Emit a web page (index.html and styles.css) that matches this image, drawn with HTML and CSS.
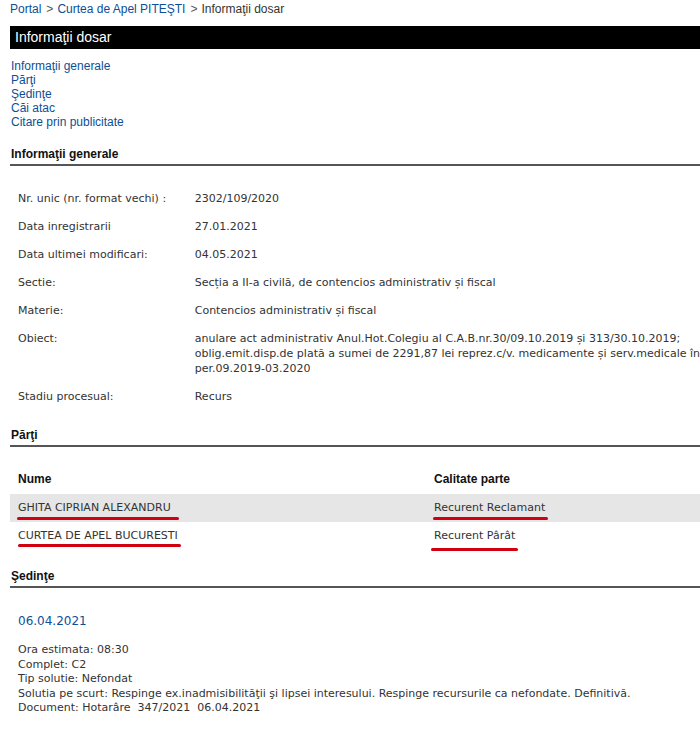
FILE: index.html
```html
<!DOCTYPE html>
<html lang="ro">
<head>
<meta charset="utf-8">
<title>Informaţii dosar</title>
<link rel="stylesheet" href="styles.css">
</head>
<body>
<div class="page">
  <div class="breadcrumb">
    <a href="#">Portal</a><span class="sep">&gt;</span><a href="#">Curtea de Apel PITEŞTI</a><span class="sep">&gt;</span><span class="current">Informaţii dosar</span>
  </div>
  <div class="titlebar">Informaţii dosar</div>
  <ul class="toc">
    <li><a href="#">Informaţii generale</a></li>
    <li><a href="#">Părţi</a></li>
    <li><a href="#">Şedinţe</a></li>
    <li><a href="#">Căi atac</a></li>
    <li><a href="#">Citare prin publicitate</a></li>
  </ul>

  <h2 class="section-title first">Informaţii generale</h2>
  <table class="info">
    <tr><td class="label">Nr. unic (nr. format vechi) :</td><td>2302/109/2020</td></tr>
    <tr><td class="label">Data inregistrarii</td><td>27.01.2021</td></tr>
    <tr><td class="label">Data ultimei modificari:</td><td>04.05.2021</td></tr>
    <tr><td class="label">Sectie:</td><td>Secția a II-a civilă, de contencios administrativ și fiscal</td></tr>
    <tr><td class="label">Materie:</td><td>Contencios administrativ și fiscal</td></tr>
    <tr><td class="label">Obiect:</td><td class="nowrap">anulare act administrativ Anul.Hot.Colegiu al C.A.B.nr.30/09.10.2019 și 313/30.10.2019;<br>oblig.emit.disp.de plată a sumei de 2291,87 lei reprez.c/v. medicamente și serv.medicale în<br>per.09.2019-03.2020</td></tr>
    <tr><td class="label">Stadiu procesual:</td><td>Recurs</td></tr>
  </table>

  <h2 class="section-title">Părţi</h2>
  <table class="parties">
    <thead>
      <tr><th class="col-name">Nume</th><th>Calitate parte</th></tr>
    </thead>
    <tbody>
      <tr class="shaded"><td><span class="mark mark-name1">GHITA CIPRIAN ALEXANDRU</span></td><td><span class="mark mark-role1">Recurent Reclamant</span></td></tr>
      <tr><td><span class="mark mark-name2">CURTEA DE APEL BUCURESTI</span></td><td><span class="mark mark-role2">Recurent Pârât</span></td></tr>
    </tbody>
  </table>

  <h2 class="section-title sessions">Şedinţe</h2>
  <div class="hearing">
    <div class="hearing-date">06.04.2021</div>
    <div class="hearing-details">
      Ora estimata: 08:30<br>
      Complet: C2<br>
      Tip solutie: Nefondat<br>
      Solutia pe scurt: Respinge ex.inadmisibilităţii şi lipsei interesului. Respinge recursurile ca nefondate. Definitivă.<br>
      Document: Hotarâre&nbsp; 347/2021&nbsp; 06.04.2021
    </div>
  </div>
</div>
</body>
</html>
```

FILE: styles.css
```css
html, body {
  margin: 0;
  padding: 0;
  background: #fff;
  overflow: hidden;
}

.page {
  padding-left: 10px;
  font-family: "Liberation Sans", Arial, sans-serif;
  font-size: 12px;
  color: #222;
}

a {
  color: #0d4f97;
  text-decoration: none;
}

.breadcrumb {
  padding-top: 2px;
  line-height: 14px;
  color: #333;
}

.breadcrumb .sep {
  color: #555;
  margin: 0 4px 0 5px;
}

.titlebar {
  margin-top: 10px;
  height: 23px;
  line-height: 23px;
  background: #000;
  color: #fff;
  font-size: 14px;
  padding-left: 5px;
}

.toc {
  list-style: none;
  margin: 10px 0 0 1px;
  padding: 0;
  line-height: 14px;
}

.section-title {
  margin: 17px 0 0 0;
  padding: 0 0 3px 1px;
  font-size: 12px;
  line-height: 14px;
  font-weight: bold;
  color: #111;
  border-bottom: 2px solid #555;
}

.section-title.first {
  margin-top: 18px;
}

.section-title.sessions {
  margin-top: 19px;
}

.info,
.parties {
  width: 100%;
  border-collapse: collapse;
  font-family: "DejaVu Sans", Verdana, sans-serif;
  font-size: 11px;
  color: #333;
}

.info {
  margin-top: 19px;
  margin-bottom: 0;
}

.info td {
  vertical-align: top;
  padding: 6px 0 7px 8px;
  line-height: 15px;
}

.info td.label {
  width: 169px;
}

.info td.nowrap {
  white-space: nowrap;
}

.parties {
  margin-top: 17px;
}

.parties th {
  text-align: left;
  font-family: "Liberation Sans", Arial, sans-serif;
  font-size: 12px;
  font-weight: bold;
  color: #111;
  padding: 8px 0 7px 8px;
  line-height: 15px;
}

.parties th.col-name {
  width: 408px;
}

.parties td {
  padding: 6px 0 7px 8px;
  line-height: 15px;
}

.parties tr.shaded td {
  background: #e6e6e6;
}

.mark {
  position: relative;
  display: inline-block;
}

.mark::after {
  content: "";
  position: absolute;
  height: 3px;
  border-radius: 2px;
  background: #d00010;
}

.mark-name1::after { left: -1px; right: -8px; bottom: -5px; }
.mark-role1::after { left: -1px; right: -3px; bottom: -5px; }
.mark-name2::after { left: 0; right: -3px; bottom: -4px; }
.mark-role2::after { left: -3px; right: -3px; bottom: -8px; }

.hearing {
  font-family: "DejaVu Sans", Verdana, sans-serif;
  font-size: 11px;
  color: #333;
  padding-left: 8px;
}

.hearing-date {
  margin-top: 26px;
  line-height: 15px;
  color: #0d4f97;
  font-size: 12px;
}

.hearing-details {
  margin-top: 14px;
  line-height: 14.5px;
}
```
